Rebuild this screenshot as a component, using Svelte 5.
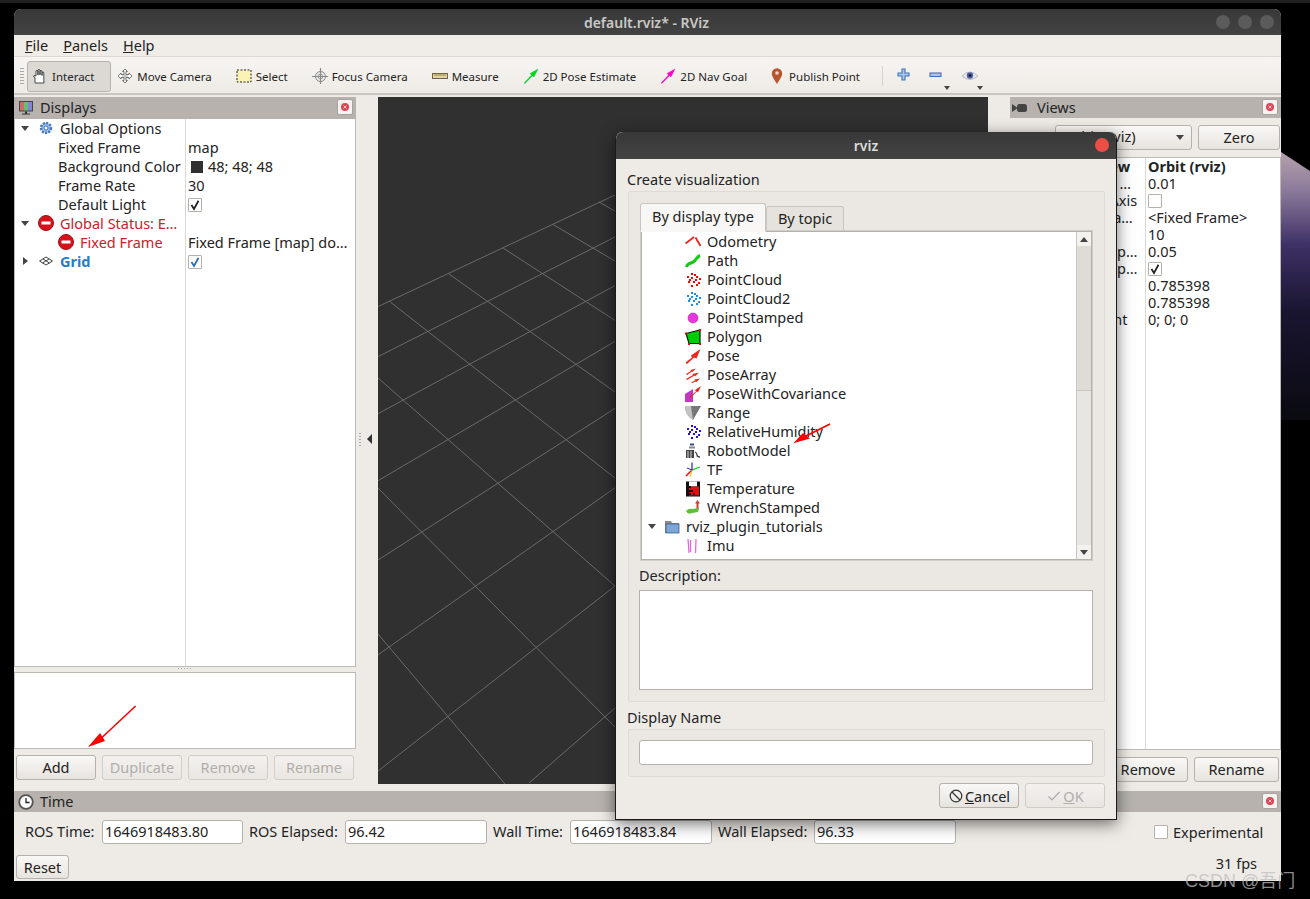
<script>
  // scattered dots shared by the point cloud style icons
  const DOTS = [[6,1],[2,4],[6,5],[11,4],[14,6],[3,9],[8,9],[13,10],[6,13],[11,12],[9,2],[4,7],[10,7]];
  const dots = (color) => DOTS.map((p) => `<rect x="${p[0]}" y="${p[1]}" width="2" height="2" fill="${color}"/>`).join("");

  const ICONS = {
    gear: '<circle cx="8" cy="8" r="5" fill="#9dbde8" stroke="#3f74bd" stroke-width="2.4" stroke-dasharray="2 1.3"/><circle cx="8" cy="8" r="2" fill="#fff" stroke="#3f74bd"/>',
    error: '<circle cx="8" cy="8" r="7.5" fill="#d5121b" stroke="#a50d14"/><rect x="3.5" y="6.5" width="9" height="3" fill="#fff"/>',
    grid: '<path d="M8 4 14.5 8 8 12 1.5 8ZM5 6 11.5 10M11 6 4.5 10" fill="none" stroke="#444" stroke-width="1"/>',
    monitor: '<rect x="1" y="1" width="14" height="10.5" fill="#444"/><rect x="2" y="2" width="4" height="8.5" fill="#d06a6a"/><rect x="6" y="2" width="4" height="8.5" fill="#6dbb77"/><rect x="10" y="2" width="4" height="8.5" fill="#7d86d8"/><path d="M7 11.5h2v2h3v1H4v-1h3Z" fill="#333"/>',
    camera: '<path d="M0 4 5 7.5V8.5L0 12Z" fill="#444"/><rect x="5" y="4" width="10" height="8" rx="2.5" fill="#444"/>',
    clock: '<circle cx="8" cy="8" r="6.8" fill="#fff" stroke="#555" stroke-width="1.8"/><path d="M8 4v4.500h3.500" fill="none" stroke="#222" stroke-width="1.3"/>',
    hand: '<path d="M3 15V9.500L1.500 8.500 2 7.500 4 8V3q1-1.500 2 0V7V2q1-1 2 0V7V3q1-1 2 0V7.500V4.500q1-1 1.800 0V11L12 15Z" fill="#fff" stroke="#333" stroke-width=".9"/>',
    move: '<path d="M8 1 10.500 3.500H9V6.500H12V5L15 8 12 11V9.500H9V12.500H10.500L8 15 5.500 12.500H7V9.500H4V11L1 8 4 5V6.500H7V3.500H5.500Z" fill="#fff" stroke="#666" stroke-width=".9"/><path d="M5 8h6M8 5v6" stroke="#999" stroke-width=".8"/>',
    select: '<rect x="1" y="2" width="14" height="12" fill="#fbf3b4" stroke="#222" stroke-dasharray="2 1.5"/>',
    focus: '<circle cx="8.5" cy="8.5" r="5" fill="#eee" stroke="#888"/><path d="M8.5 0v17M0 8.5h17" stroke="#888" stroke-width="1.2"/><circle cx="8.5" cy="8.5" r="2.4" fill="none" stroke="#999"/>',
    measure: '<rect x="0.5" y="5.5" width="15" height="5" fill="#e5d592" stroke="#6c6450"/><path d="M3 6v2M5 6v2M7 6v2M9 6v2M11 6v2M13 6v2" stroke="#6c6450" stroke-width=".7"/>',
    pose: '<path d="M1 15 8.500 7 7 5.500 15 1 11 9 9.500 7.700 2 15.500Z" fill="#0d0" stroke="#0a8" stroke-width=".3"/>',
    nav: '<path d="M1 15 8.500 7 7 5.500 15 1 11 9 9.500 7.700 2 15.500Z" fill="#f0c" stroke="#c0a" stroke-width=".3"/>',
    pin: '<path d="M6 16C3 11 .8 8.500 .8 5.500a5.200 5.200 0 0 1 10.400 0C11.200 8.500 9 11 6 16Z" fill="#b7552c"/><circle cx="6" cy="5" r="1.800" fill="#f1d7c8"/>',
    plus: '<path d="M5 1h3v4h4v3H8v4H5V8H1V5h4Z" fill="#a9c6e8" stroke="#3d74b5" stroke-width="1.1"/>',
    minus: '<rect x="1" y="5" width="11" height="3.5" fill="#a9c6e8" stroke="#3d74b5" stroke-width="1.1"/>',
    eye: '<path d="M0 8Q8 0 16 8 8 15 0 8Z" fill="#e8e8ec" stroke="#bbb"/><circle cx="8" cy="7.5" r="3.2" fill="#4f5fa8"/><circle cx="8" cy="7.5" r="1.3" fill="#111"/>',
    odometry: '<path d="M.5 9.500 9 3M10.500 3.500 15.500 12" fill="none" stroke="#e8281c" stroke-width="1.8"/>',
    path: '<path d="M1.500 14C2.500 9 7 11 9.500 8S12.500 3.500 15 2.500" fill="none" stroke="#11cc11" stroke-width="3"/>',
    cloudRed: dots("#f00"),
    cloudBlue: dots("#1b8cf0"),
    point: '<circle cx="8" cy="8" r="5" fill="#e934e0" stroke="#b020b0" stroke-width=".6"/>',
    polygon: '<path d="M1 4.500 15 1V14.500H4Z" fill="#0c0" stroke="#111" stroke-width="1.2"/><path d="M0 3.500h2v2H0ZM14 0h2v2h-2ZM14 14h2v2h-2ZM3 14h2v2H3Z" fill="#f00"/>',
    redArrow: '<path d="M0.500 14.500 7 9.500 6 7.500 15.500 1 11.500 10.500 9 9.500 2 16Z" fill="#e8281c"/>',
    poseArray: '<path d="M1 7 6 4 5.500 3 11 1.500 7.500 5 7 4.500 2 8ZM1 12 8 8 7.500 7 14 5.500 10 9.500 9.500 8.500 2 13ZM6 15.500 10 13.500 9.500 12.500 15 11.500 11.500 15 11 14.500 7 16Z" fill="#e8281c"/>',
    covariance: '<path d="M0 8 8 3 8 16H0Z" fill="#c238c4"/><path d="M4 11 11 5.500 10 4 16 0 13 6.500 12 5.500 5 12Z" fill="#e8281c"/>',
    range: '<path d="M0 1H16L8 15Q0 10 0 1Z" fill="#777"/><path d="M0 1H6L8 15Q0 10 0 1Z" fill="#c4c4c4"/>',
    humidity: dots("#2a10d8"),
    robot: '<rect x="5" y="0.5" width="4" height="2" fill="#2d4c88"/><rect x="4" y="3.5" width="6" height="2" fill="#888"/><path d="M1 7h8v8H1Z" fill="#444"/><path d="M3 8v7M6 8v7" stroke="#ddd"/><path d="M10 9q2 1 2 3t3 2" fill="none" stroke="#444" stroke-width="1.3"/>',
    tf: '<path d="M7 8 15 5" stroke="#0c0" stroke-width="1.2"/><path d="M7 8 7 0.500" stroke="#22c" stroke-width="1.2"/><path d="M7 8 1 14" stroke="#e11" stroke-width="1.6"/><path d="M7 8 5 15" stroke="#cc0" stroke-width="1"/><path d="M2 6 7 8" stroke="#22c" stroke-width="1"/>',
    temperature: '<rect x="1" y="0.5" width="14" height="15" fill="#111"/><rect x="4" y="0.5" width="8" height="5" fill="#fff"/><rect x="4" y="5.500" width="10" height="9" fill="#e01010"/><path d="M3 5h3v2H3ZM3 9h5v2H3ZM3 12h3v2H3ZM8 12h2v2H8Z" fill="#111"/>',
    wrench: '<path d="M12.500 0 15 3.500H13.500V10H11.500V3.500H10Z" fill="#d23c3c"/><path d="M1 11q3-3 6-2l7-1-1 4-6 1q-4 2-6-2Z" fill="#5fbe3a"/>',
    folder: '<path d="M1 2H7L8 4H15V14H1Z" fill="#8a8a8a"/><rect x="2" y="5" width="13" height="9" fill="#7ba7d8" stroke="#3e5c8a" stroke-width=".8"/>',
    imu: '<path d="M3 1 4 15M5.500 2 5.500 14M11 1 10.500 15" stroke="#e868e0" stroke-width="1.3"/>'
  };

  const displays = [
    { arrow: "down", icon: "gear", x: 60, name: "Global Options", iconX: 23 },
    { name: "Fixed Frame", x: 58, value: "map" },
    { name: "Background Color", x: 58, swatch: true, value: "48; 48; 48" },
    { name: "Frame Rate", x: 58, value: "30" },
    { name: "Default Light", x: 58, check: "dark" },
    { arrow: "down", icon: "error", x: 60, iconX: 23, name: "Global Status: E…", cls: "err" },
    { icon: "error", iconX: 43, x: 80, name: "Fixed Frame", cls: "err", value: "Fixed Frame [map] do…" },
    { arrow: "right", icon: "grid", iconX: 23, x: 60, name: "Grid", cls: "link", check: "blue" }
  ];

  const tools = [
    { icon: "hand", label: "Interact", active: true },
    { icon: "move", label: "Move Camera" },
    { icon: "select", label: "Select" },
    { icon: "focus", label: "Focus Camera" },
    { icon: "measure", label: "Measure" },
    { icon: "pose", label: "2D Pose Estimate" },
    { icon: "nav", label: "2D Nav Goal" },
    { icon: "pin", label: "Publish Point", tight: true }
  ];

  const views = [
    ["Current View", "Orbit (rviz)", true],
    ["Near Clip …", "0.01"],
    ["Invert Z Axis", null, "box"],
    ["Target Fra…", "<Fixed Frame>"],
    ["Distance", "10"],
    ["Focal Shap…", "0.05"],
    ["Focal Shap…", null, "check"],
    ["Yaw", "0.785398"],
    ["Pitch", "0.785398"],
    ["Focal Point", "0; 0; 0"]
  ];

  const types = [
    ["odometry", "Odometry"], ["path", "Path"], ["cloudRed", "PointCloud"],
    ["cloudBlue", "PointCloud2"], ["point", "PointStamped"], ["polygon", "Polygon"],
    ["redArrow", "Pose"], ["poseArray", "PoseArray"], ["covariance", "PoseWithCovariance"],
    ["range", "Range"], ["humidity", "RelativeHumidity"], ["robot", "RobotModel"],
    ["tf", "TF"], ["temperature", "Temperature"], ["wrench", "WrenchStamped"]
  ];

  const times = [
    ["ROS Time:", "1646918483.80"], ["ROS Elapsed:", "96.42"],
    ["Wall Time:", "1646918483.84"], ["Wall Elapsed:", "96.33"]
  ];

  // grid lines read off the screenshot, page coordinates
  const gridLines = [
    [378, 306.6, 615, 195], [378, 356.6, 615, 237], [378, 413.7, 615, 285.6],
    [378, 480.7, 615, 341.4], [378, 560, 615, 408.4], [378, 654.8, 615, 487.8],
    [378, 771, 615, 586], [529, 783, 615, 708],
    [599, 202, 615, 211], [553, 224.5, 615, 261], [503, 248, 615, 320.4],
    [449, 274, 615, 392], [389, 301, 615, 478], [378, 378, 615, 586],
    [378, 488, 615, 727], [378, 634, 505, 784]
  ];
</script>

{#snippet icon(name, size = 16)}
  <svg class="icon" width={size} height={size} viewBox="0 0 16 16">{@html ICONS[name]}</svg>
{/snippet}

{#snippet closeBtn()}
  <span class="dock-close">
    <svg width="10" height="10" viewBox="0 0 10 10"><circle cx="5" cy="5" r="4" fill="#dd4455" /><path d="M3.5 3.5 6.500 6.500M6.500 3.500 3.500 6.500" stroke="#f6d0d4" stroke-width=".9" /></svg>
  </span>
{/snippet}

{#snippet checkbox(kind)}
  <span class="check {kind}">
    {#if kind !== "box"}
      <svg width="12" height="12" viewBox="0 0 12 12"><path d="M2.5 6 5 10 9.5 1.8" fill="none" stroke-width="1.8" /></svg>
    {/if}
  </span>
{/snippet}

<div class="wall">
  <svg class="planet" width="29" height="420" viewBox="0 0 29 420">
    <defs>
      <linearGradient id="pl" x1="0" y1="150" x2="0" y2="420" gradientUnits="userSpaceOnUse">
        <stop offset="0" stop-color="#b7a3ac" />
        <stop offset=".15" stop-color="#8c7a9c" />
        <stop offset=".35" stop-color="#3e3166" />
        <stop offset=".6" stop-color="#191530" />
        <stop offset="1" stop-color="#0a0a10" />
      </linearGradient>
    </defs>
    <path d="M0 152 29 171V420H0Z" fill="url(#pl)" />
  </svg>

  <div class="strip"></div>

  <div class="window">
    <div class="titlebar">
      <span>default.rviz* - RViz</span>
      <div class="controls"><b></b><b></b><b></b></div>
    </div>

    <div class="menubar">
      <span><u>F</u>ile</span><span><u>P</u>anels</span><span><u>H</u>elp</span>
    </div>

    <div class="toolbar">
      <div class="grip"></div>
      {#each tools as t}
        <div class="tool" class:active={t.active} class:tight={t.tight}>
          {@render icon(t.icon)}
          <span>{t.label}</span>
        </div>
      {/each}
      <div class="sep"></div>
      <div class="mini">{@render icon("plus")}</div>
      <div class="mini drop">{@render icon("minus")}</div>
      <div class="mini drop eye">{@render icon("eye")}</div>
    </div>

    <div class="main">
      <div class="left-dock">
        <div class="dock-head">
          {@render icon("monitor")}
          <span>Displays</span>
          {@render closeBtn()}
        </div>
        <div class="tree">
          <div class="tree-split"></div>
          {#each displays as d}
            <div class="tree-row">
              {#if d.arrow}<span class="arrow {d.arrow}"></span>{/if}
              {#if d.icon}<span class="tree-icon" style="left:{d.iconX}px">{@render icon(d.icon)}</span>{/if}
              <span class="tree-name {d.cls || ''}" style="left:{d.x - 15}px">{d.name}</span>
              <span class="tree-value">
                {#if d.swatch}<i class="swatch"></i>{/if}
                {#if d.check}{@render checkbox(d.check)}{/if}
                {#if d.value}{d.value}{/if}
              </span>
            </div>
          {/each}
          <div class="grip-h"></div>
        </div>
        <div class="desc"></div>
        <div class="btn-row">
          <button class="btn">Add</button>
          <button class="btn off">Duplicate</button>
          <button class="btn off">Remove</button>
          <button class="btn off">Rename</button>
        </div>
      </div>

      <div class="splitter">
        <div class="dots"></div>
        <span class="collapse"></span>
      </div>

      <div class="view">
        <svg width="610" height="687" viewBox="378 97 610 687">
          {#each gridLines as l}
            <line x1={l[0]} y1={l[1]} x2={l[2]} y2={l[3]} />
          {/each}
        </svg>
      </div>

      <div class="right-dock">
        <div class="dock-head">
          {@render icon("camera")}
          <span>Views</span>
          {@render closeBtn()}
        </div>
        <div class="views-top">
          <span class="type-label">Type:</span>
          <div class="combo">Orbit (rviz)<i></i></div>
          <button class="btn zero">Zero</button>
        </div>
        <div class="props">
          <div class="props-split"></div>
          {#each views as v}
            <div class="prop-row" class:bold={v[2] === true}>
              <span class="prop-name">{v[0]}</span>
              <span class="prop-val">
                {#if v[2] === "box" || v[2] === "check"}
                  {@render checkbox(v[2] === "box" ? "box" : "dark")}
                {:else}
                  {v[1]}
                {/if}
              </span>
            </div>
          {/each}
        </div>
        <div class="btn-row views-btns">
          <button class="btn">Save As</button>
          <button class="btn">Remove</button>
          <button class="btn">Rename</button>
        </div>
      </div>
    </div>

    <div class="time">
      <div class="dock-head">
        {@render icon("clock")}
        <span>Time</span>
        {@render closeBtn()}
      </div>
      <div class="time-row">
        {#each times as t}
          <span class="time-label">{t[0]}</span>
          <div class="field">{t[1]}</div>
        {/each}
        <span class="exp">{@render checkbox("box")}<span>Experimental</span></span>
      </div>
      <div class="time-foot">
        <button class="btn reset">Reset</button>
        <span>31 fps</span>
      </div>
    </div>
  </div>

  <div class="dialog">
    <div class="dlg-title">rviz<b></b></div>
    <div class="dlg-body">
      <div class="dlg-label">Create visualization</div>
      <div class="group main-group">
        <div class="tabs">
          <span class="tab on">By display type</span>
          <span class="tab">By topic</span>
        </div>
        <div class="list">
          <div class="list-items">
            {#each types as t}
              <div class="list-row">
                {@render icon(t[0])}
                <span>{t[1]}</span>
              </div>
            {/each}
            <div class="list-row folder">
              <span class="arrow down"></span>
              {@render icon("folder")}
              <span>rviz_plugin_tutorials</span>
            </div>
            <div class="list-row">
              {@render icon("imu")}
              <span>Imu</span>
            </div>
          </div>
          <div class="scroll">
            <span class="sb-btn up"></span>
            <div class="sb-track"><div class="sb-thumb"></div></div>
            <span class="sb-btn dn"></span>
          </div>
        </div>
        <div class="desc-label">Description:</div>
        <div class="desc-box"></div>
      </div>
      <div class="dlg-label name-label">Display Name</div>
      <div class="group name-group">
        <div class="name-input"></div>
      </div>
      <div class="dlg-btns">
        <button class="btn">
          <svg width="16" height="16" viewBox="0 0 16 16"><circle cx="8" cy="8" r="5.8" fill="none" stroke="#333" stroke-width="1.2" /><path d="M4 4 12 12" stroke="#333" stroke-width="1.2" /></svg>
          <span><u>C</u>ancel</span>
        </button>
        <button class="btn off">
          <svg width="16" height="16" viewBox="0 0 16 16"><path d="M2.5 8.5 6 12 13.5 4" fill="none" stroke="#aaa" stroke-width="1.2" /></svg>
          <span><u>O</u>K</span>
        </button>
      </div>
    </div>
  </div>

  <svg class="marks" width="1310" height="899" viewBox="0 0 1310 899">
    <path d="M88 747 100 733 105 741Z" fill="#f00" />
    <path d="M102 737.5 135.600 706" stroke="#f00" stroke-width="1.6" />
    <path d="M793.300 443.300 803 433 810 438.500Z" fill="#f00" />
    <path d="M806 436 830 424" stroke="#f00" stroke-width="1.6" />
  </svg>

  <div class="watermark">CSDN @吾门</div>
</div>

<style>
  :global(body) {
    margin: 0;
    background: #000;
  }
  .wall {
    position: relative;
    width: 1310px;
    height: 899px;
    overflow: hidden;
    background: #000;
    font-family: "Noto Sans", sans-serif;
    font-size: 14.5px;
    color: #232323;
  }
  .planet {
    position: absolute;
    left: 1281px;
    top: 0;
  }
  .strip {
    height: 3px;
    background: #202020;
    margin-bottom: 6px;
  }
  .window {
    margin-left: 14px;
    width: 1267px;
    height: 872px;
    display: flex;
    flex-direction: column;
    background: #eeebe6;
    border-radius: 7px 7px 0 0;
    position: relative;
  }
  .titlebar {
    height: 26px;
    background: linear-gradient(#383838, #434343);
    border-radius: 7px 7px 0 0;
    display: flex;
    align-items: center;
    justify-content: center;
    color: #c9c9c6;
    font-weight: 600;
    font-size: 14px;
    padding-right: 2px;
    position: relative;
  }
  .controls {
    position: absolute;
    right: 7px;
    top: 6px;
    display: flex;
    gap: 8px;
  }
  .controls b {
    width: 14px;
    height: 14px;
    border-radius: 50%;
    background: #5b5b5b;
  }
  .menubar {
    height: 21px;
    box-sizing: border-box;
    padding: 0 0 2px 11px;
    display: flex;
    align-items: center;
    gap: 15px;
    background: #f0ede8;
  }
  .toolbar {
    height: 39px;
    box-sizing: border-box;
    border-top: 1px solid #dcd9d4;
    border-bottom: 2px solid #c9c6c1;
    background: linear-gradient(#f7f5f2, #eeebe6);
    display: flex;
    align-items: center;
    gap: 24px;
    padding: 2px 0 0 18px;
    font-size: 11.5px;
    position: relative;
  }
  .grip {
    position: absolute;
    left: 6px;
    top: 10px;
    width: 4px;
    height: 18px;
    background: radial-gradient(circle, #aaa 0.6px, transparent 0.8px) 0 0/2px 3px;
  }
  .tool {
    display: flex;
    align-items: center;
    gap: 4px;
    white-space: nowrap;
  }
  .tool.tight {
    gap: 2px;
  }
  .tool.active {
    margin: 0 -18px 0 -5px;
    padding: 0 16px 0 4px;
    height: 31px;
    box-sizing: border-box;
    border: 1px solid #b5b2ac;
    border-radius: 3px;
    background: #dcd9d5;
  }
  .sep {
    width: 1px;
    height: 20px;
    background: #d6d3ce;
    margin-left: -2px;
  }
  .mini {
    margin-left: -10px;
    position: relative;
    display: flex;
    width: 16px;
    margin-right: 2px;
  }
  .mini.eye {
    margin-left: -9px;
  }
  .mini.drop::after {
    content: "";
    position: absolute;
    right: -5px;
    bottom: -9px;
    border: 3.5px solid transparent;
    border-top: 4px solid #444;
  }
  .icon {
    flex: none;
    display: block;
  }

  .main {
    height: 696px;
    display: flex;
  }
  .left-dock {
    width: 342px;
    padding-top: 2px;
    display: flex;
    flex-direction: column;
  }
  .dock-head {
    height: 22px;
    background: #b7b2ae;
    display: flex;
    align-items: center;
    gap: 6px;
    padding-left: 4px;
    position: relative;
    flex: none;
  }
  .dock-head > span:not(.dock-close) {
    margin-top: -2px;
  }
  .dock-close {
    position: absolute;
    right: 3px;
    top: 2px;
    width: 16px;
    height: 16px;
    box-sizing: border-box;
    background: #f5f3f0;
    border: 1px solid #a8a39e;
    border-radius: 2px;
    display: flex;
    align-items: center;
    justify-content: center;
  }
  .tree {
    height: 548px;
    box-sizing: border-box;
    background: #fff;
    border: 1px solid #bdb9b4;
    border-top: 0;
    position: relative;
    flex: none;
  }
  .tree-split {
    position: absolute;
    left: 170px;
    top: 0;
    bottom: 0;
    width: 1px;
    background: #dad8d4;
  }
  .tree-row {
    height: 19px;
    position: relative;
    line-height: 19px;
  }
  .tree-row .arrow {
    position: absolute;
    left: 6px;
    top: 7px;
  }
  .arrow.down {
    width: 0;
    height: 0;
    border: 4.5px solid transparent;
    border-top: 5px solid #444;
    border-bottom: 0;
  }
  .arrow.right {
    width: 0;
    height: 0;
    border: 4.5px solid transparent;
    border-left: 5px solid #444;
    border-right: 0;
    top: 5px !important;
    left: 8px !important;
  }
  .tree-icon {
    position: absolute;
    top: 1px;
  }
  .tree-name {
    position: absolute;
    top: 0;
    white-space: nowrap;
  }
  .tree-name.err {
    color: #c7222a;
  }
  .tree-name.link {
    color: #2a7ac8;
    font-weight: 700;
  }
  .tree-value {
    position: absolute;
    left: 173px;
    top: 0;
    display: flex;
    align-items: center;
    height: 19px;
    white-space: nowrap;
  }
  .swatch {
    width: 12px;
    height: 12px;
    background: #303030;
    margin: 0 5px 0 3px;
  }
  .check {
    width: 14px;
    height: 14px;
    box-sizing: border-box;
    border: 1px solid #b5b2ac;
    background: #fff;
    border-radius: 1px;
    display: inline-flex;
    align-items: center;
    justify-content: center;
  }
  .check.dark svg {
    stroke: #222;
  }
  .check.blue svg {
    stroke: #2a70b8;
  }
  .grip-h {
    position: absolute;
    left: 162px;
    bottom: -4px;
    width: 14px;
    height: 3px;
    background: radial-gradient(circle, #aaa 0.6px, transparent 0.8px) 0 0/3px 3px;
  }
  .desc {
    height: 77px;
    box-sizing: border-box;
    background: #fff;
    border: 1px solid #bdb9b4;
    margin-top: 5px;
    flex: none;
  }
  .btn-row {
    display: flex;
    gap: 6px;
    padding: 6px 2px 0;
  }
  .btn {
    height: 25px;
    width: 80px;
    box-sizing: border-box;
    border: 1px solid #b5b2ac;
    border-radius: 3px;
    background: linear-gradient(#f9f8f6, #e7e4df);
    font: inherit;
    color: #232323;
    padding: 0;
    display: inline-flex;
    align-items: center;
    justify-content: center;
    gap: 1px;
  }
  .btn-row .btn,
  .zero {
    padding-bottom: 2px;
  }
  .btn.off {
    color: #b1aeaa;
    border-color: #d0cdc8;
    background: linear-gradient(#f3f1ee, #e9e6e2);
  }
  .splitter {
    width: 22px;
    position: relative;
  }
  .dots {
    position: absolute;
    left: 3px;
    top: 337px;
    width: 2px;
    height: 16px;
    background: radial-gradient(circle, #aaa 0.6px, transparent 0.8px) 0 0/2px 3px;
  }
  .collapse {
    position: absolute;
    left: 11px;
    top: 339px;
    border: 5px solid transparent;
    border-right: 5px solid #333;
    border-left: 0;
  }
  .view {
    width: 610px;
    height: 687px;
    margin-top: 2px;
    background: #303030;
  }
  .view svg {
    display: block;
  }
  .view line {
    stroke: #6a6a6a;
    stroke-width: 1;
  }
  .right-dock {
    width: 293px;
    padding-top: 2px;
    display: flex;
    flex-direction: column;
  }
  .right-dock .dock-head {
    margin-left: 22px;
    height: 21px;
    gap: 9px;
    padding-left: 2px;
  }
  .views-top {
    display: flex;
    align-items: center;
    margin-top: 7px;
    height: 25px;
    padding-left: 24px;
  }
  .type-label {
    width: 43px;
  }
  .combo {
    width: 137px;
    height: 25px;
    box-sizing: border-box;
    border: 1px solid #b5b2ac;
    border-radius: 3px;
    background: linear-gradient(#f9f8f6, #e7e4df);
    padding: 0 0 0 8px;
    position: relative;
  }
  .combo i {
    position: absolute;
    right: 7px;
    top: 9px;
    border: 4.5px solid transparent;
    border-top: 5px solid #444;
    border-bottom: 0;
  }
  .zero {
    width: 82px;
    margin-left: 6px;
  }
  .props {
    height: 593px;
    box-sizing: border-box;
    margin-top: 7px;
    background: #fff;
    border: 1px solid #bdb9b4;
    position: relative;
    flex: none;
  }
  .props-split {
    position: absolute;
    left: 156px;
    top: 0;
    bottom: 0;
    width: 1px;
    background: #dad8d4;
  }
  .prop-row {
    height: 17px;
    line-height: 17px;
    position: relative;
    white-space: nowrap;
  }
  .prop-row.bold {
    font-weight: 700;
  }
  .prop-name {
    position: absolute;
    left: 64px;
  }
  .bold .prop-name {
    left: 47px;
  }
  .prop-val {
    position: absolute;
    left: 159px;
    display: flex;
    align-items: center;
    height: 17px;
  }
  .views-btns {
    padding: 7px 2px 0 0;
    justify-content: flex-end;
  }
  .views-btns .btn:nth-child(3) {
    width: 85px;
  }

  .time {
    flex: 1;
    display: flex;
    flex-direction: column;
  }
  .time .dock-head {
    height: 21px;
  }
  .time-row {
    display: grid;
    grid-template-columns: 77px 147px 96px 148px 77px 148px 96px 148px;
    align-items: center;
    height: 24px;
    margin-top: 8px;
    padding-left: 11px;
    position: relative;
  }
  .time-label {
    white-space: nowrap;
    margin-top: -2px;
  }
  .field {
    height: 24px;
    box-sizing: border-box;
    border: 1px solid #b5b2ac;
    border-radius: 3px;
    background: #fff;
    padding-left: 2px;
    line-height: 20px;
    margin-right: 6px;
  }
  .exp {
    position: absolute;
    left: 1140px;
    top: 2px;
    display: flex;
    align-items: center;
    gap: 5px;
  }
  .time-foot {
    display: flex;
    justify-content: space-between;
    margin-top: 11px;
    padding: 0 24px 0 2px;
    align-items: flex-start;
    position: relative;
  }
  .reset {
    width: 53px;
    height: 24px;
  }
  .time-foot > span {
    margin-top: -2px;
  }

  .dialog {
    position: absolute;
    left: 615px;
    top: 132px;
    width: 502px;
    height: 688px;
    box-sizing: border-box;
    border: 1px solid #1a1a1a;
    border-top: 0;
    border-radius: 7px 7px 0 0;
    background: #eeebe6;
    box-shadow: 0 4px 16px rgba(0, 0, 0, 0.55);
    display: flex;
    flex-direction: column;
  }
  .dlg-title {
    height: 27px;
    flex: none;
    background: linear-gradient(#383838, #434343);
    border-radius: 7px 7px 0 0;
    color: #dcdcd8;
    font-weight: 600;
    font-size: 14px;
    display: flex;
    align-items: center;
    justify-content: center;
    position: relative;
  }
  .dlg-title b {
    position: absolute;
    right: 7px;
    top: 6px;
    width: 14px;
    height: 14px;
    border-radius: 50%;
    background: #ea4e45;
  }
  .dlg-body {
    padding: 0 11px;
    display: flex;
    flex-direction: column;
  }
  .dlg-label {
    height: 20px;
    line-height: 18px;
    margin-top: 11px;
  }
  .group {
    border: 1px solid #dedbd6;
    background: #ebe8e3;
    border-radius: 2px;
    box-sizing: border-box;
    margin-left: 1px;
  }
  .main-group {
    height: 511px;
    margin-top: 1px;
    padding: 10px 11px 0 10px;
  }
  .tabs {
    display: flex;
    height: 29px;
    align-items: flex-end;
    margin-left: 1px;
  }
  .tab {
    height: 25px;
    line-height: 22px;
    padding: 0 11px;
    box-sizing: border-box;
    border: 1px solid #c9c6c1;
    border-bottom: 0;
    border-radius: 3px 3px 0 0;
    background: #e6e3de;
  }
  .tab.on {
    height: 29px;
    line-height: 25px;
    background: #f8f7f5;
    position: relative;
    top: 1px;
    z-index: 1;
    border-bottom: 1px solid #f8f7f5;
  }
  .list {
    height: 329px;
    box-sizing: border-box;
    border: 1px solid #b5b2ac;
    outline: 1px solid #d0cdc8;
    margin: 0 1px 0 2px;
    background: #fff;
    display: flex;
    overflow: hidden;
  }
  .list-items {
    flex: 1;
  }
  .list-row {
    height: 19px;
    display: flex;
    align-items: center;
    gap: 6px;
    padding-left: 43px;
    white-space: nowrap;
  }
  .list-row > span:not(.arrow) {
    margin-top: -2px;
  }
  .list-row.folder {
    padding-left: 6px;
  }
  .list-row.folder .arrow {
    margin-right: 2px;
  }
  .scroll {
    width: 14px;
    border-left: 1px solid #c9c6c1;
    background: #e8e6e2;
    display: flex;
    flex-direction: column;
  }
  .sb-btn {
    height: 14px;
    background: #f4f2ef;
    position: relative;
    flex: none;
  }
  .sb-btn::after {
    content: "";
    position: absolute;
    left: 3px;
    border: 4px solid transparent;
  }
  .sb-btn.up::after {
    top: 1px;
    border-bottom: 5px solid #444;
  }
  .sb-btn.dn::after {
    top: 5px;
    border-top: 5px solid #444;
  }
  .sb-track {
    flex: 1;
  }
  .sb-thumb {
    height: 144px;
    background: #dfdcd8;
    border-bottom: 1px solid #c9c6c1;
  }
  .desc-label {
    height: 20px;
    line-height: 18px;
    margin-top: 6px;
  }
  .desc-box {
    height: 100px;
    margin-top: 4px;
    box-sizing: border-box;
    background: #fff;
    border: 1px solid #b5b2ac;
  }
  .name-label {
    margin-top: 6px;
  }
  .name-group {
    height: 48px;
    margin-top: 1px;
    padding: 10px 11px 0 10px;
  }
  .name-input {
    height: 25px;
    box-sizing: border-box;
    background: #fff;
    border: 1px solid #b5b2ac;
    border-radius: 3px;
  }
  .dlg-btns {
    display: flex;
    justify-content: flex-end;
    gap: 6px;
    margin-top: 6px;
  }
  .dlg-btns .btn svg {
    display: block;
  }

  .marks {
    position: absolute;
    left: 0;
    top: 0;
    pointer-events: none;
  }
  .watermark {
    position: absolute;
    left: 1185px;
    top: 866px;
    font-family: "Liberation Sans", "Noto Sans CJK SC", sans-serif;
    font-size: 18px;
    color: rgba(190, 190, 190, 0.75);
    white-space: nowrap;
  }
</style>
